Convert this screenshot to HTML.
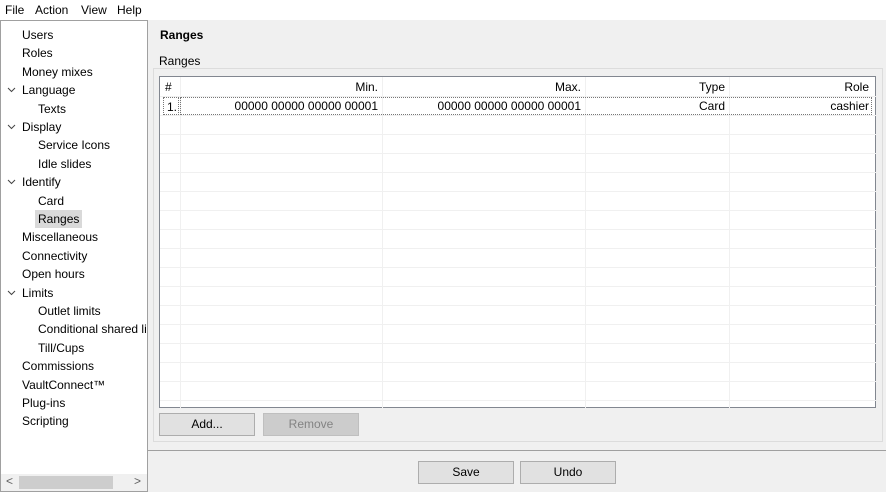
<!DOCTYPE html><html><head><style>
*{margin:0;padding:0;box-sizing:border-box}
body{width:886px;height:492px;background:#f0f0f0;font-family:"Liberation Sans",sans-serif;font-size:12px;color:#000;position:relative;overflow:hidden}
.a{position:absolute}
.menu{left:0;top:0;width:886px;height:20px;background:#fff}
.menu span{position:absolute;top:3px}
.tree{left:0;top:20px;width:148px;height:472px;background:#fff;border:1px solid #a0a0a0}
.it{position:absolute;white-space:nowrap;height:18px;line-height:18px}
.tbl{left:159px;top:76px;width:717px;height:332px;background:#fff;border:1px solid #828790}
.vl{position:absolute;top:0;width:1px;height:331px;background:#f0f0f0}
.hl{position:absolute;left:0;width:716px;height:1px;background:#f0f0f0}
.btn{position:absolute;height:23px;background:#e1e1e1;border:1px solid #adadad;text-align:center;line-height:21px}
</style></head><body>
<div class="a menu"><span style="left:5px">File</span><span style="left:35px">Action</span><span style="left:81px">View</span><span style="left:117px">Help</span></div>
<div class="a tree">
<div class="it" style="left:21px;top:5px">Users</div>
<div class="it" style="left:21px;top:23px">Roles</div>
<div class="it" style="left:21px;top:42px">Money mixes</div>
<div class="it" style="left:21px;top:60px">Language</div>
<div class="it" style="left:37px;top:79px">Texts</div>
<div class="it" style="left:21px;top:97px">Display</div>
<div class="it" style="left:37px;top:115px">Service Icons</div>
<div class="it" style="left:37px;top:134px">Idle slides</div>
<div class="it" style="left:21px;top:152px">Identify</div>
<div class="it" style="left:37px;top:171px">Card</div>
<div class="it" style="left:34px;top:189px;background:#d9d9d9;padding:0 3px">Ranges</div>
<div class="it" style="left:21px;top:207px">Miscellaneous</div>
<div class="it" style="left:21px;top:226px">Connectivity</div>
<div class="it" style="left:21px;top:244px">Open hours</div>
<div class="it" style="left:21px;top:263px">Limits</div>
<div class="it" style="left:37px;top:281px">Outlet limits</div>
<div class="it" style="left:37px;top:299px;width:109px;overflow:hidden">Conditional shared limits</div>
<div class="it" style="left:37px;top:318px">Till/Cups</div>
<div class="it" style="left:21px;top:336px">Commissions</div>
<div class="it" style="left:21px;top:355px">VaultConnect™</div>
<div class="it" style="left:21px;top:373px">Plug-ins</div>
<div class="it" style="left:21px;top:391px">Scripting</div>
<svg class="a" style="left:6px;top:66px" width="9" height="6"><path d="M1 1l3.5 3.5L8 1" fill="none" stroke="#444"/></svg>
<svg class="a" style="left:6px;top:103px" width="9" height="6"><path d="M1 1l3.5 3.5L8 1" fill="none" stroke="#444"/></svg>
<svg class="a" style="left:6px;top:158px" width="9" height="6"><path d="M1 1l3.5 3.5L8 1" fill="none" stroke="#444"/></svg>
<svg class="a" style="left:6px;top:269px" width="9" height="6"><path d="M1 1l3.5 3.5L8 1" fill="none" stroke="#444"/></svg>
<div class="a" style="left:0;top:453px;width:146px;height:17px;background:#f0f0f0"></div>
<div class="a" style="left:18px;top:455px;width:94px;height:13px;background:#cdcdcd"></div>
<div class="a" style="left:5px;top:453px;color:#606060">&lt;</div>
<div class="a" style="left:133px;top:453px;color:#606060">&gt;</div>
</div>
<div class="a" style="left:160px;top:28px;font-weight:bold">Ranges</div>
<div class="a" style="left:153px;top:68px;width:730px;height:374px;border:1px solid #dcdcdc"></div>
<div class="a" style="left:157px;top:54px;background:#f0f0f0;padding:0 2px">Ranges</div>
<div class="a tbl">
<div class="vl" style="left:20px"></div><div class="vl" style="left:222px"></div><div class="vl" style="left:425px"></div><div class="vl" style="left:569px"></div>
<div class="hl" style="top:19px"></div><div class="hl" style="top:38px"></div><div class="hl" style="top:57px"></div><div class="hl" style="top:76px"></div><div class="hl" style="top:95px"></div><div class="hl" style="top:114px"></div><div class="hl" style="top:133px"></div><div class="hl" style="top:152px"></div><div class="hl" style="top:171px"></div><div class="hl" style="top:190px"></div><div class="hl" style="top:209px"></div><div class="hl" style="top:228px"></div><div class="hl" style="top:247px"></div><div class="hl" style="top:266px"></div><div class="hl" style="top:285px"></div><div class="hl" style="top:304px"></div><div class="hl" style="top:323px"></div>
<div class="a" style="left:5px;top:3px">#</div>
<div class="a" style="left:22px;width:196px;top:3px;text-align:right">Min.</div>
<div class="a" style="left:224px;width:197px;top:3px;text-align:right">Max.</div>
<div class="a" style="left:427px;width:138px;top:3px;text-align:right">Type</div>
<div class="a" style="left:571px;width:138px;top:3px;text-align:right">Role</div>
<div class="a" style="left:3px;top:20px;width:16px;height:18px;border:1px dotted #777;padding:2px 0 0 3px">1.</div>
<div class="a" style="left:20px;top:20px;width:692px;height:18px;border:1px dotted #777"></div>
<div class="a" style="left:22px;width:196px;top:22px;text-align:right">00000 00000 00000 00001</div>
<div class="a" style="left:224px;width:197px;top:22px;text-align:right">00000 00000 00000 00001</div>
<div class="a" style="left:427px;width:138px;top:22px;text-align:right">Card</div>
<div class="a" style="left:571px;width:138px;top:22px;text-align:right">cashier</div>
</div>
<div class="btn" style="left:159px;top:413px;width:96px">Add...</div>
<div class="btn" style="left:263px;top:413px;width:96px;background:#cccccc;border-color:#bfbfbf;color:#838383">Remove</div>
<div class="a" style="left:148px;top:450px;width:738px;height:1px;background:#a0a0a0"></div>
<div class="btn" style="left:418px;top:461px;width:96px">Save</div>
<div class="btn" style="left:520px;top:461px;width:96px">Undo</div>
</body></html>
